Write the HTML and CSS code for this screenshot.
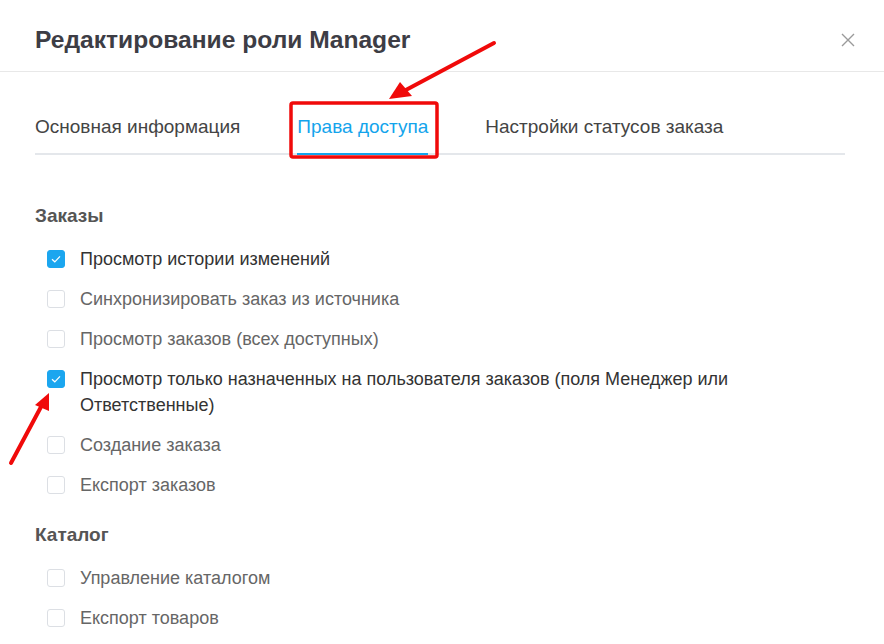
FILE: index.html
```html
<!DOCTYPE html>
<html lang="ru">
<head>
<meta charset="utf-8">
<link rel="stylesheet" href="styles.css">
</head>
<body>
<div class="modal">
  <header class="modal-header">
    <h1 class="modal-title">Редактирование роли Manager</h1>
    <button class="close" aria-label="Закрыть">
      <svg width="14" height="14" viewBox="0 0 14 14"><path d="M1 1L13 13M13 1L1 13" stroke="#9a9a9a" stroke-width="1.4" fill="none"/></svg>
    </button>
  </header>
  <div class="modal-body">
    <nav class="tabs">
      <span class="tab">Основная информация</span>
      <span class="tab active">Права доступа</span>
      <span class="tab">Настройки статусов заказа</span>
    </nav>

    <section class="group">
      <h2 class="group-title">Заказы</h2>
      <ul class="perms">
        <li class="perm checked"><span class="box"><svg viewBox="0 0 18 18" width="18" height="18"><path d="M5 9.2L7.8 11.8L13 6.3" stroke="#fff" stroke-width="1.2" fill="none"/></svg></span><span class="label">Просмотр истории изменений</span></li>
        <li class="perm"><span class="box"></span><span class="label">Синхронизировать заказ из источника</span></li>
        <li class="perm"><span class="box"></span><span class="label">Просмотр заказов (всех доступных)</span></li>
        <li class="perm checked"><span class="box"><svg viewBox="0 0 18 18" width="18" height="18"><path d="M5 9.2L7.8 11.8L13 6.3" stroke="#fff" stroke-width="1.2" fill="none"/></svg></span><span class="label">Просмотр только назначенных на пользователя заказов (поля Менеджер или Ответственные)</span></li>
        <li class="perm"><span class="box"></span><span class="label">Создание заказа</span></li>
        <li class="perm"><span class="box"></span><span class="label">Експорт заказов</span></li>
      </ul>
    </section>

    <section class="group">
      <h2 class="group-title">Каталог</h2>
      <ul class="perms">
        <li class="perm"><span class="box"></span><span class="label">Управление каталогом</span></li>
        <li class="perm"><span class="box"></span><span class="label">Експорт товаров</span></li>
      </ul>
    </section>
  </div>

  <svg class="annot" width="884" height="644" viewBox="0 0 884 644">
    <rect x="291" y="103" width="146" height="54" rx="2" fill="none" stroke="#f00a0a" stroke-width="3.5"/>
    <path d="M494 43L404 91" stroke="#f00a0a" stroke-width="4" stroke-linecap="round" fill="none"/>
    <path d="M389 99L400 82L412 96Z" fill="#f00a0a"/>
    <path d="M11 463L42 405" stroke="#f00a0a" stroke-width="4" stroke-linecap="round" fill="none"/>
    <path d="M49 393L35 405L49 411Z" fill="#f00a0a"/>
  </svg>
</div>
</body>
</html>
```

FILE: styles.css
```css
* { box-sizing: border-box; }
html, body {
  margin: 0;
  padding: 0;
  background: #fff;
}
body {
  font-family: "Liberation Sans", Arial, sans-serif;
  color: #444;
  width: 884px;
  height: 644px;
  overflow: hidden;
}
.modal {
  position: relative;
  width: 884px;
  height: 644px;
}
.modal-header {
  height: 72px;
  border-bottom: 1px solid #e8e8e8;
  display: flex;
  align-items: center;
  justify-content: space-between;
  padding: 8px 29px 0 35px;
}
.modal-title {
  margin: 0;
  font-size: 24.6px;
  font-weight: bold;
  color: #3d3d45;
}
.close {
  border: 0;
  background: none;
  padding: 0;
  width: 14px;
  height: 14px;
  cursor: pointer;
  display: flex;
}
.modal-body {
  padding: 0 39px 0 35px;
}
.tabs {
  display: flex;
  gap: 57px;
  border-bottom: 2px solid #e4e7eb;
  padding-top: 31px;
}
.tab {
  font-size: 19px;
  line-height: 24px;
  color: #444;
  padding: 12px 0 14px;
  margin-bottom: -2px;
  border-bottom: 2px solid transparent;
}
.tab.active {
  color: #13a4ec;
  border-bottom-color: #13a4ec;
}
.group-title {
  margin: 0;
  font-size: 19px;
  font-weight: bold;
  color: #555;
  line-height: 24px;
}
.tabs + .group .group-title { margin-top: 49px; }
.group + .group .group-title { margin-top: 25px; }
.perms {
  list-style: none;
  margin: 18px 0 0;
  padding: 0 0 0 12px;
  display: flex;
  flex-direction: column;
  gap: 14px;
}
.perm {
  display: flex;
  align-items: flex-start;
  gap: 15px;
  font-size: 18px;
  line-height: 26px;
  color: #666;
}
.perm.checked { color: #333; }
.box {
  flex: none;
  width: 18px;
  height: 18px;
  margin-top: 4px;
  border: 1px solid #dcdfe4;
  border-radius: 3px;
  background: #fff;
  display: flex;
}
.perm.checked .box {
  background: #1ba6ef;
  border-color: #1ba6ef;
}
.box svg { margin: -1px; }
.annot {
  position: absolute;
  left: 0;
  top: 0;
  pointer-events: none;
}
```
